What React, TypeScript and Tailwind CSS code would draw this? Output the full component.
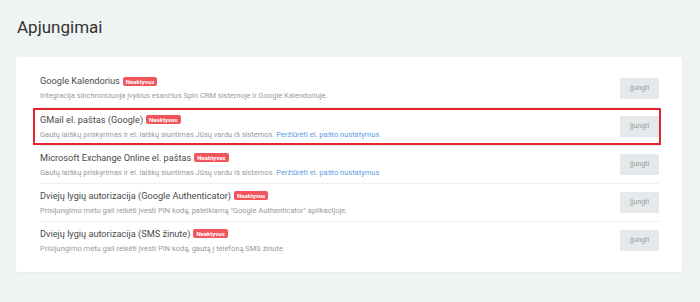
import React from "react";

type Row = { title: string; desc: string; link?: string; highlight?: boolean };

const rows: Row[] = [
  { title: "Google Kalendorius", desc: "Integracija sinchronizuoja įvykius esančius Spin CRM sistemoje ir Google Kalendoriuje." },
  { title: "GMail el. paštas (Google)", desc: "Gautų laiškų priskyrimas ir el. laiškų siuntimas Jūsų vardu iš sistemos.", link: "Peržiūrėti el. pašto nustatymus", highlight: true },
  { title: "Microsoft Exchange Online el. paštas", desc: "Gautų laiškų priskyrimas ir el. laiškų siuntimas Jūsų vardu iš sistemos.", link: "Peržiūrėti el. pašto nustatymus" },
  { title: "Dviejų lygių autorizacija (Google Authenticator)", desc: "Prisijungimo metu gali reikėti įvesti PIN kodą, pateikiamą \"Google Authenticator\" aplikacijoje." },
  { title: "Dviejų lygių autorizacija (SMS žinute)", desc: "Prisijungimo metu gali reikėti įvesti PIN kodą, gautą į telefoną SMS žinute" },
];

export default function App() {
  return (
    <div className="w-[700px] h-[302px] bg-[#f0f3f4] overflow-hidden" style={{ fontFamily: "Roboto, 'Liberation Sans', sans-serif" }}>
      <div className="pl-[16px] pr-[18px] pt-[15px]">
        <h1 className="text-[17px] leading-[24px] text-[#333] font-normal pl-[1px]">Apjungimai</h1>
        <div className="mt-[18px] bg-white rounded-[3px] pl-[24px] pr-[23px] pt-[12px] pb-[13px] shadow-[0_1px_1px_rgba(0,0,0,0.03)]">
          {rows.map((r, i) => (
            <div key={i} className={`relative flex items-center h-[38px] ${i > 0 ? "border-t border-[#eeeeee]" : ""}`}>
              {r.highlight && (
                <div className="absolute left-[-7px] right-[-2px] top-[0px] bottom-[0px] border-2 border-[#e8242f] pointer-events-none" />
              )}
              <div className="flex-1 flex flex-col">
                <div className="flex items-center gap-[3px] text-[9.2px] leading-[14px] text-[#4a4a4a]">
                  <span>{r.title}</span>
                  <span className="bg-[#f2545c] text-white text-[6px] font-bold leading-[9px] px-[3px] rounded-[2px]">Neaktyvus</span>
                </div>
                <div className="text-[7.5px] leading-[12px] text-[#9a9a9a] mt-[2px]">
                  {r.desc}
                  {r.link && <span className="text-[#5c9ee0]"> {r.link}</span>}
                </div>
              </div>
              <button className="w-[39px] h-[21px] bg-[#e6e9ec] text-[#9a9a9a] text-[7px] rounded-[1px]">Įjungti</button>
            </div>
          ))}
        </div>
      </div>
    </div>
  );
}
